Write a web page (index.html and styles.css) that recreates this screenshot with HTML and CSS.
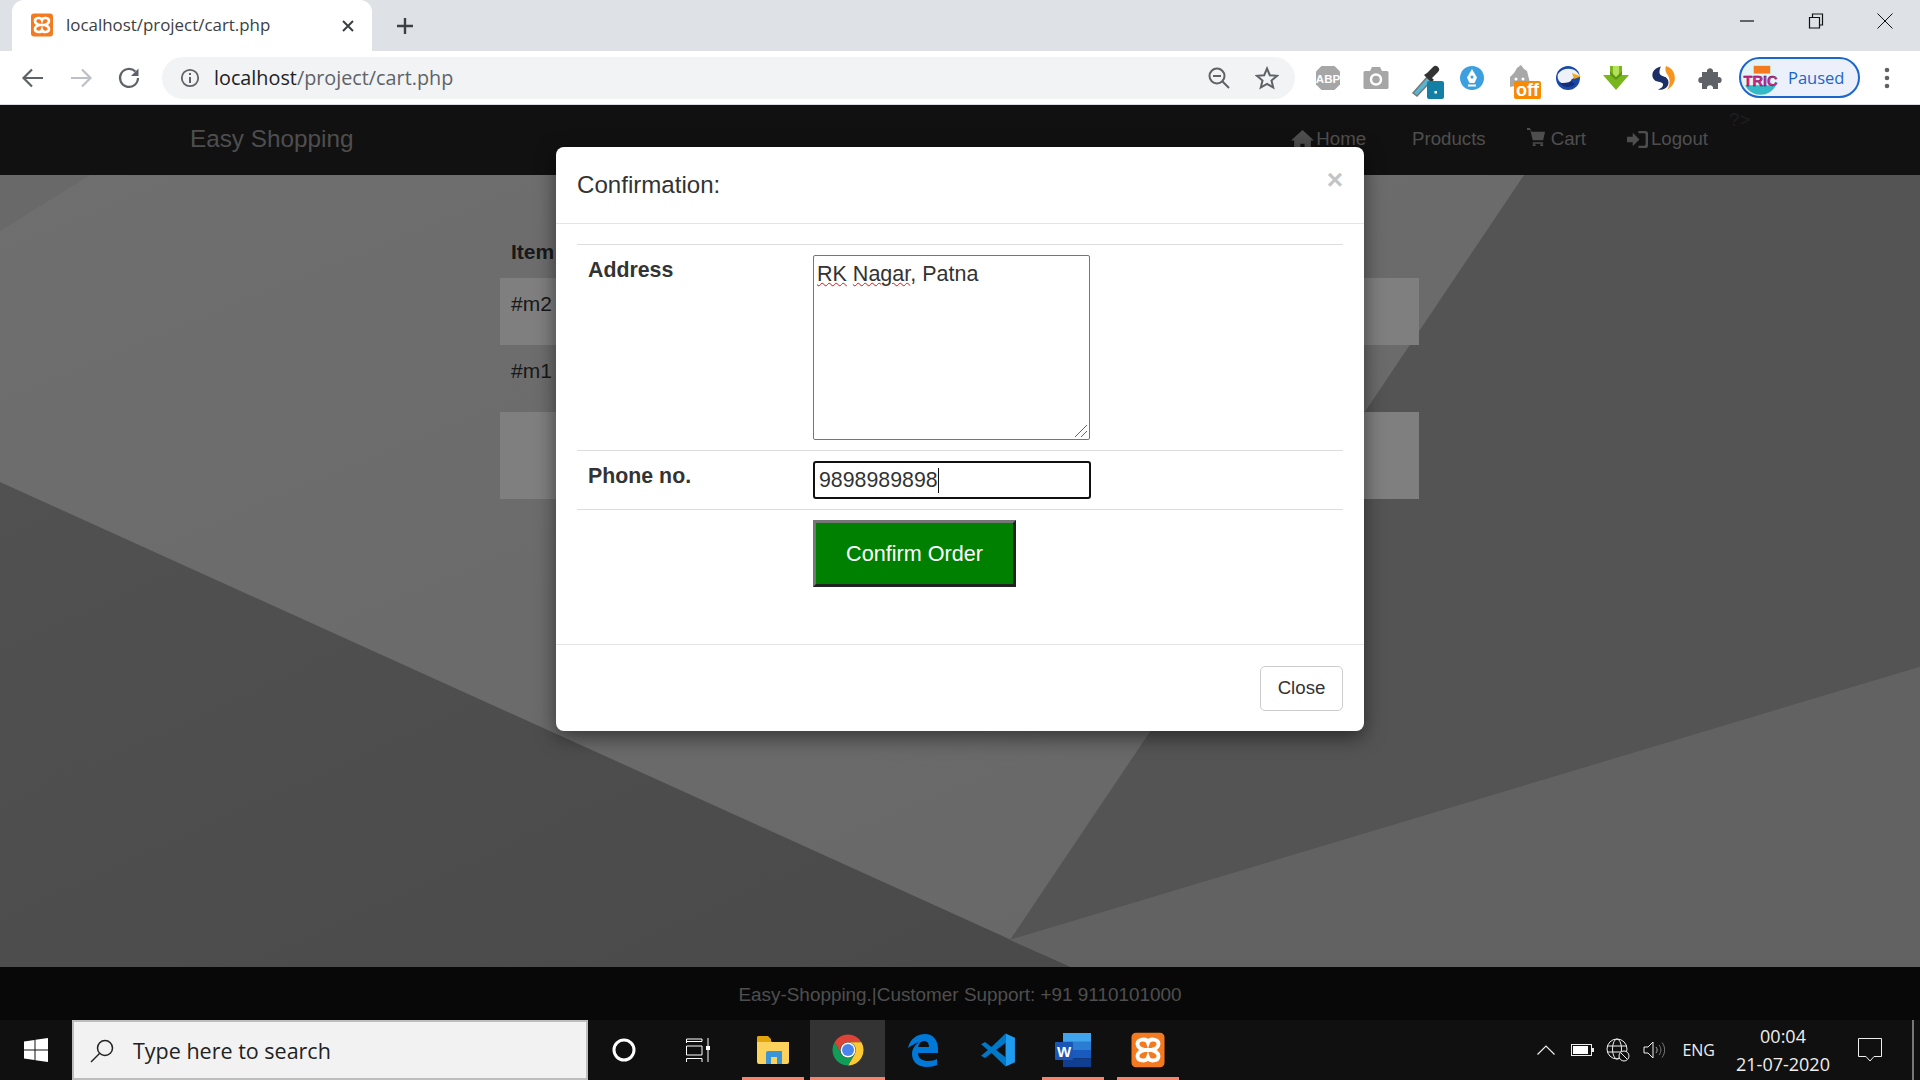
FILE: index.html
```html
<!DOCTYPE html>
<html lang="en">
<head>
    <meta charset="UTF-8">
    <meta name="viewport" content="width=device-width, initial-scale=1.0">
    <title>localhost/project/cart.php</title>
    <link rel="stylesheet" href="styles.css">
</head>
<body>
    <svg class="svg-defs" aria-hidden="true">
        <symbol id="xampp" viewBox="0 0 24 24">
            <rect x="1" y="0.500" width="22" height="23" rx="3" fill="#f47a20"/>
            <path d="M12 7C11 4 5 4.500 5 8C5 10 7.500 11.500 9.500 12C7.500 12.500 5 14 5 16C5 19.500 11 20 12 17C13 20 19 19.500 19 16C19 14 16.500 12.500 14.500 12C16.500 11.500 19 10 19 8C19 4.500 13 4 12 7ZM9.500 12H14.500" fill="none" stroke="#fff" stroke-width="2.600"/>
        </symbol>
        <linearGradient id="wall-light" x1="0" y1="0" x2="1" y2="1">
            <stop offset="0" stop-color="#dedede"/>
            <stop offset="1" stop-color="#cdcdcd"/>
        </linearGradient>
        <linearGradient id="wall-dark" x1="0" y1="0" x2="1" y2="1">
            <stop offset="0" stop-color="#a2a2a2"/>
            <stop offset="1" stop-color="#949494"/>
        </linearGradient>
    </svg>

    <!-- Browser tabs -->
    <div class="tab-strip">
        <div class="tab">
            <svg class="favicon" viewBox="0 0 24 24"><use href="#xampp"/></svg>
            <span class="tab-title">localhost/project/cart.php</span>
            <svg class="tab-close" viewBox="0 0 12 12"><path d="M1 1L11 11M11 1L1 11" stroke="#3c4043" stroke-width="2"/></svg>
        </div>
        <svg class="new-tab" viewBox="0 0 18 18"><path d="M9 1V17M1 9H17" stroke="#3c4043" stroke-width="2.400"/></svg>
        <div class="window-controls">
            <svg viewBox="0 0 16 16"><path d="M1 8H15" stroke="#111" stroke-width="1.200"/></svg>
            <svg viewBox="0 0 16 16"><path d="M1.500 4.500H11.500V15H1.500ZM4.500 4.500V1H14.500V12H11.500" fill="none" stroke="#111" stroke-width="1.200"/></svg>
            <svg viewBox="0 0 16 16"><path d="M0.500 0.500L15.500 15.500M15.500 0.500L0.500 15.500" stroke="#111" stroke-width="1"/></svg>
        </div>
    </div>

    <!-- Browser toolbar -->
    <div class="toolbar">
        <svg class="tool-btn" viewBox="0 0 48 24"><path d="M34 12H15M23 3.500L14.500 12L23 20.500" fill="none" stroke="#5f6368" stroke-width="2.200"/></svg>
        <svg class="tool-btn" viewBox="0 0 48 24"><path d="M14 12H33M25 3.500L33.500 12L25 20.500" fill="none" stroke="#bdc1c6" stroke-width="2.200"/></svg>
        <svg class="tool-btn" viewBox="0 0 48 24"><path d="M30.400 5.600A9 9 0 1 0 33 12" fill="none" stroke="#5f6368" stroke-width="2.200"/><path d="M33.500 2.500V10H26Z" fill="#5f6368"/></svg>
        <div class="omnibox">
            <svg class="info-icon" viewBox="0 0 20 20"><circle cx="10" cy="10" r="8.200" fill="none" stroke="#5f6368" stroke-width="1.800"/><path d="M10 9V15M10 5V7" stroke="#5f6368" stroke-width="2"/></svg>
            <span class="url"><span class="url-host">localhost</span>/project/cart.php</span>
            <svg class="omni-icon" viewBox="0 0 24 24"><circle cx="10" cy="10" r="7.500" fill="none" stroke="#5f6368" stroke-width="2"/><path d="M15.500 15.500L22 22M6 10H14" stroke="#5f6368" stroke-width="2"/></svg>
            <svg class="omni-icon" viewBox="0 0 24 24"><path d="M12 2.500L14.800 9.200L22 9.800L16.500 14.500L18.200 21.500L12 17.800L5.800 21.500L7.500 14.500L2 9.800L9.200 9.200Z" fill="none" stroke="#5f6368" stroke-width="2"/></svg>
        </div>
        <div class="extensions">
            <svg class="ext" viewBox="0 0 48 30"><path d="M17.500 3H30.500L36 8.500V21.500L30.500 27H17.500L12 21.500V8.500Z" fill="#a6a6a6"/><text x="24" y="19.500" class="ext-label">ABP</text></svg>
            <svg class="ext" viewBox="0 0 48 30"><path d="M13 8H18L20 4H28L30 8H35A1.500 1.500 0 0 1 36.500 9.500V25A1.500 1.500 0 0 1 35 26H13A1.500 1.500 0 0 1 11.500 25V9.500A1.500 1.500 0 0 1 13 8Z" fill="#a6a6a6"/><circle cx="24" cy="16.500" r="5" fill="none" stroke="#fff" stroke-width="2.500"/></svg>
            <svg class="ext ext-tall" viewBox="0 0 48 42"><path d="M13 30L28 13L32 17L17 33Z" fill="#5ab4d0" stroke="#777" stroke-width="1.500"/><path d="M27 10L33 4A3 3 0 0 1 38 9L32 15L34 17L31 19L24 12Z" fill="#333"/><rect x="27" y="18" width="17" height="18" rx="2" fill="#147fa5"/><rect x="34.500" y="28" width="2.500" height="2.500" fill="#fff"/></svg>
            <svg class="ext" viewBox="0 0 48 30"><path d="M24 3C31 3 36 8.500 36 15C36 21.500 31 27 24 27C17 27 12 21.500 12 15C12 8.500 17 3 24 3Z" fill="#3b9fe0"/><path d="M24 6L29 14.500L26.500 20H21.500L19 14.500Z" fill="#fff"/><path d="M20 22.500H28" stroke="#fff" stroke-width="2"/><circle cx="24" cy="14" r="1.500" fill="#3b9fe0"/></svg>
            <svg class="ext ext-tall" viewBox="0 0 48 42"><path d="M14 24V14L18 10L21 5L25 2L28 6L31 8L34 20Z" fill="#a8a8a8"/><circle cx="20" cy="16" r="1.500" fill="#fff"/><circle cx="27" cy="16" r="1.500" fill="#fff"/><rect x="18" y="18" width="27" height="18" rx="2" fill="#f98a00"/><text x="31.500" y="32.500" class="ext-off">off</text></svg>
            <svg class="ext" viewBox="0 0 48 30"><circle cx="24" cy="15" r="12" fill="#1a49a8"/><path d="M14 11C18 5 28 4 33 9L36 13L30 15C27 16 26 18 27 22C23 23 18 21 15 18C14 16 13 14 14 11Z" fill="#eef2f8"/><path d="M28 10L37 13.500L30 16Z" fill="#f2a81d"/><path d="M16 20C20 25 27 25 31 21L27 18C24 20 20 20 16 20Z" fill="#132f7a"/></svg>
            <svg class="ext" viewBox="0 0 48 30"><path d="M18 3H30V12H37L24 27L11 12H18Z" fill="#79b51d"/><path d="M21 3H27V14H21Z" fill="#b4e05a"/><path d="M18 8L24 14L30 8V12L24 17L18 12Z" fill="#5d9a12"/></svg>
            <svg class="ext" viewBox="0 0 48 30"><path d="M21 3.500C14 5 11 10 13 15C15 20 22 18 23 21C23.500 24 20 26 18 26.500C26 28 30 22 28 17C26 12 20 14 19.500 10C19.300 8 20 5 21 3.500Z" fill="#1c2f66"/><path d="M26 3C33 5 36 12 34.500 18C33.500 22 30 25 27 27C31 21 30 15 27 11C25 8 25 5 26 3Z" fill="#f7941d"/></svg>
            <svg class="ext" viewBox="0 0 48 30"><path d="M14 9H19C18 4 26 4 25 9H30V14C35 13 35 21 30 20V26H25C26 21 18 21 19 26H14V20C9 21 9 13 14 14Z" fill="#5f6368"/></svg>
        </div>
        <div class="profile">
            <svg class="avatar" viewBox="0 0 36 36"><circle cx="18" cy="18" r="18" fill="#e3f4f6"/><path d="M2 26H34A18 18 0 0 1 2 26Z" fill="#35b8c8"/><rect x="11" y="6" width="17" height="8" fill="#f47a20"/><text x="18" y="27" class="avatar-label">TRIC</text></svg>
            <span class="profile-label">Paused</span>
        </div>
        <svg class="menu-dots" viewBox="0 0 6 22"><circle cx="3" cy="3" r="2.300" fill="#5f6368"/><circle cx="3" cy="11" r="2.300" fill="#5f6368"/><circle cx="3" cy="19" r="2.300" fill="#5f6368"/></svg>
    </div>

    <!-- The page inside the browser -->
    <div class="viewport">
        <nav class="navbar">
            <a class="brand">Easy Shopping</a>
            <span class="stray-text">?&gt;</span>
            <ul class="nav-links">
                <li class="nav-home"><svg class="glyph glyph-home" viewBox="0 0 22 22"><path d="M11 2L22 12H19V22H13V15H9V22H3V12H0Z"/></svg>Home</li>
                <li>Products</li>
                <li><svg class="glyph glyph-cart" viewBox="0 0 20 22"><path d="M0 1H3L5 5H19L17 14H6L3.500 3H0ZM6 16H17V17.500H6ZM6 18H9V20H6ZM14 18H17V20H14Z"/></svg>Cart</li>
                <li><svg class="glyph glyph-logout" viewBox="0 0 22 22"><path d="M0 8H6V4L13 11L6 18V14H0ZM12 2H19A3 3 0 0 1 22 5V17A3 3 0 0 1 19 20H12V17.500H18A1.500 1.500 0 0 0 19.500 16V6A1.500 1.500 0 0 0 18 4.500H12Z"/></svg>Logout</li>
            </ul>
        </nav>

        <main class="content">
            <svg class="wallpaper" viewBox="0 0 1920 792" preserveAspectRatio="none">
                <rect width="1920" height="792" fill="url(#wall-light)"/>
                <polygon points="0,0 90,0 0,56" fill="#d2d2d2"/>
                <polygon points="0,307 1071,792 0,792" fill="url(#wall-dark)"/>
                <polygon points="1524,0 1920,0 1920,492 1010,765" fill="#a8a8a8"/>
                <polygon points="1010,765 1920,492 1920,792 1071,792" fill="#c4c4c4"/>
            </svg>
            <table class="cart-table">
                <tr><th>Item</th></tr>
                <tr class="row-odd"><td>#m2</td></tr>
                <tr><td>#m1</td></tr>
                <tr class="row-total"><td></td></tr>
            </table>
        </main>

        <footer class="site-footer">Easy-Shopping.|Customer Support: +91 9110101000</footer>

        <div class="backdrop"></div>

        <!-- Confirmation modal -->
        <div class="modal-wrap">
            <div class="modal">
                <div class="modal-header">
                    <h4>Confirmation:</h4>
                    <span class="modal-x">×</span>
                </div>
                <div class="modal-body">
                    <div class="form-row">
                        <label>Address</label>
                        <div class="fake-textarea">
                            <span class="misspelled">RK</span> <span class="misspelled">Nagar</span>, Patna
                            <svg class="grip" viewBox="0 0 14 14"><path d="M1 13L13 1M7 13L13 7" stroke="#666" stroke-width="1"/></svg>
                        </div>
                    </div>
                    <div class="form-row">
                        <label>Phone no.</label>
                        <div class="fake-input">9898989898<span class="caret"></span></div>
                    </div>
                    <div class="form-row form-row-last">
                        <span></span>
                        <button class="confirm-btn">Confirm Order</button>
                    </div>
                </div>
                <div class="modal-footer">
                    <button class="close-btn">Close</button>
                </div>
            </div>
        </div>
    </div>

    <!-- Windows taskbar -->
    <div class="taskbar">
        <div class="start">
            <svg viewBox="0 0 24 24"><path d="M0 3.500L10.500 2V11.500H0ZM11.500 1.800L24 0V11.500H11.500ZM0 12.500H10.500V22L0 20.500ZM11.500 12.500H24V24L11.500 22.200Z" fill="#fff"/></svg>
        </div>
        <div class="search-box">
            <svg viewBox="0 0 24 24"><circle cx="15" cy="9" r="7.500" fill="none" stroke="#222" stroke-width="1.500"/><path d="M9.500 14.500L1 23" stroke="#222" stroke-width="1.500"/></svg>
            <span>Type here to search</span>
        </div>
        <div class="tile tile-narrow"><svg class="cortana" viewBox="0 0 24 24"><circle cx="12" cy="12" r="10" fill="none" stroke="#fff" stroke-width="3"/></svg></div>
        <div class="tile"><svg class="task-view" viewBox="0 0 24 24"><path d="M0.500 5V1H16M0.500 3.500H16V1M0.500 8H16V17H0.500ZM0.500 24V20.500H16V24M22 0V24" fill="none" stroke="#fff" stroke-width="1"/><rect x="20" y="8" width="4" height="4" fill="#fff"/></svg></div>
        <div class="tile tile-open">
            <svg class="folder" viewBox="0 0 32 28"><path d="M0 5A2 2 0 0 1 2 3H12L15 6H32V26A2 2 0 0 1 30 28H2A2 2 0 0 1 0 26Z" fill="#fbd25c"/><path d="M0 3A2 2 0 0 1 2 0H11L14 3V6H0Z" fill="#e2a50b"/><path d="M9 28V17A2 2 0 0 1 11 15H25V28H20V21H14V28Z" fill="#3a94d8"/></svg>
        </div>
        <div class="tile tile-open tile-active">
            <svg class="chrome" viewBox="0 0 48 48"><path d="M5 13A22 22 0 0 1 43 13H24A11 11 0 0 0 14.500 29.500Z" fill="#db4437"/><path d="M43 13A22 22 0 0 1 24 46L33.500 29.500A11 11 0 0 0 24 13Z" fill="#fcc934"/><path d="M24 46A22 22 0 0 1 5 13L14.500 29.500A11 11 0 0 0 33.500 29.500Z" fill="#0f9d58"/><circle cx="24" cy="24" r="10.500" fill="#fff"/><circle cx="24" cy="24" r="8.500" fill="#4a85ed"/></svg>
        </div>
        <div class="tile">
            <svg class="edge" viewBox="0 0 32 34"><path d="M1 15C3 6 10 1 18 1C26 1 31 7 31 16V20H11C11 26 16 28 21 28C25 28 28 27 30 26V32C27 33 24 34 20 34C10 34 5 28 5 21C5 16 8 12 12 9C9 10 5 12 1 15ZM11 14H22C22 10 20 8 17 8C14 8 12 10 11 14Z" fill="#0078d7"/></svg>
        </div>
        <div class="tile">
            <svg class="vscode" viewBox="0 0 100 100"><path d="M71 4L32 42L14 28L3 34L22 50L3 66L14 72L32 58L71 96V70L45 50L71 30Z" fill="#0078c8"/><path d="M71 4L97 16V84L71 96Z" fill="#1f9cf0"/></svg>
        </div>
        <div class="tile tile-open">
            <svg class="word" viewBox="0 0 36 34"><rect x="8" y="0" width="28" height="9" fill="#41a5ee"/><rect x="8" y="8.500" width="28" height="8.500" fill="#2b7cd3"/><rect x="8" y="17" width="28" height="8.500" fill="#185abd"/><rect x="8" y="25.500" width="28" height="8.500" fill="#103f91"/><rect x="0" y="9" width="18" height="18" rx="1" fill="#1a56b5"/><text x="9" y="23.500" class="word-letter">W</text></svg>
        </div>
        <div class="tile tile-open"><svg class="xampp" viewBox="0 0 24 24"><use href="#xampp"/></svg></div>

        <div class="tray">
            <svg class="tray-chevron" viewBox="0 0 18 10"><path d="M0.500 9.500L9 1L17.500 9.500" fill="none" stroke="#eee" stroke-width="1.200"/></svg>
            <svg class="tray-battery" viewBox="0 0 23 12"><rect x="0.500" y="0.500" width="20" height="11" fill="none" stroke="#eee"/><rect x="2" y="2" width="15" height="8" fill="#fff"/><rect x="21" y="4" width="2" height="4" fill="#eee"/></svg>
            <svg class="tray-globe" viewBox="0 0 24 24"><circle cx="11" cy="11" r="10" fill="none" stroke="#eee"/><ellipse cx="11" cy="11" rx="4.500" ry="10" fill="none" stroke="#eee"/><path d="M1 8H21M1 14H21" stroke="#eee"/><circle cx="18" cy="18" r="5" fill="#101010" stroke="#eee"/><path d="M15 15L21 21" stroke="#eee"/></svg>
            <svg class="tray-sound" viewBox="0 0 22 18"><path d="M1 6H5L10 1V17L5 12H1Z" fill="none" stroke="#eee"/><path d="M13 6C14.500 8 14.500 10 13 12" fill="none" stroke="#aaa"/><path d="M16 4C18.500 7 18.500 11 16 14M19 1.500C22.500 6 22.500 12 19 16.500" fill="none" stroke="#777"/></svg>
            <span class="tray-lang">ENG</span>
            <div class="clock"><span>00:04</span><span>21-07-2020</span></div>
            <svg class="tray-notify" viewBox="0 0 24 24"><path d="M0.500 0.500H23.500V18.500H16L12 23L8 18.500H0.500Z" fill="none" stroke="#eee"/></svg>
            <span class="show-desktop"></span>
        </div>
    </div>
</body>
</html>
```

FILE: styles.css
```css
* {
    box-sizing: border-box;
}
html, body {
    margin: 0;
    height: 1080px;
    overflow: hidden;
}
body {
    display: flex;
    flex-direction: column;
    font-family: "Liberation Sans", Arial, sans-serif;
    font-size: 18.67px;
    line-height: 1.43;
    color: #333;
}
.svg-defs {
    position: absolute;
    width: 0;
    height: 0;
}

/* browser tabs */
.tab-strip {
    height: 51px;
    flex: none;
    display: flex;
    align-items: flex-end;
    padding-left: 12px;
    background: #dee1e6;
}
.tab {
    width: 360px;
    height: 51px;
    display: flex;
    align-items: center;
    padding: 0 18px 0 18px;
    background: #fff;
    border-radius: 12px 12px 0 0;
}
.favicon {
    width: 24px;
    height: 24px;
    margin-bottom: 2px;
}
.tab-title {
    margin-left: 12px;
    flex: 1;
    font-family: "Open Sans", sans-serif;
    font-size: 16.9px;
    color: #3c4043;
    white-space: nowrap;
}
.tab-close {
    width: 12px;
    height: 12px;
}
.new-tab {
    width: 18px;
    height: 18px;
    margin: 0 0 16px 24px;
}
.window-controls {
    margin-left: auto;
    align-self: flex-start;
    display: flex;
    gap: 53px;
    padding: 13px 27px 0 0;
}
.window-controls svg {
    width: 16px;
    height: 16px;
}

/* browser toolbar */
.toolbar {
    height: 54px;
    flex: none;
    display: flex;
    align-items: center;
    padding: 0 0 0 9px;
    background: #fff;
    border-bottom: 1px solid #dadce0;
}
.tool-btn {
    width: 48px;
    height: 24px;
    flex: none;
}
.omnibox {
    width: 1133px;
    height: 42px;
    margin-left: 9px;
    flex: none;
    display: flex;
    align-items: center;
    padding: 0 16px 0 18px;
    background: #f1f3f4;
    border-radius: 21px;
}
.info-icon {
    width: 20px;
    height: 20px;
}
.url {
    margin-left: 14px;
    padding-top: 2px;
    flex: 1;
    font-family: "Open Sans", sans-serif;
    font-size: 19.8px;
    color: #5f6368;
}
.url-host {
    color: #202124;
}
.omni-icon {
    width: 24px;
    height: 24px;
    margin-left: 24px;
}
.extensions {
    display: flex;
    align-items: flex-start;
    height: 30px;
    margin-left: 9px;
    flex: none;
}
.ext {
    width: 48px;
    height: 30px;
    overflow: visible;
}
.ext-tall {
    height: 42px;
}
.ext-label {
    font-size: 11.5px;
    font-weight: bold;
    fill: #fff;
    text-anchor: middle;
}
.ext-off {
    font-size: 18px;
    font-weight: bold;
    fill: #fff;
    text-anchor: middle;
}
.profile {
    width: 121px;
    height: 41px;
    margin-left: 3px;
    flex: none;
    display: flex;
    align-items: center;
    padding-left: 2px;
    background: #ebf0fb;
    border: 2px solid #1a66cc;
    border-radius: 21px;
}
.avatar {
    width: 35px;
    height: 35px;
    flex: none;
}
.avatar-label {
    font-size: 15px;
    font-weight: bold;
    fill: #ec1f8e;
    stroke: #221133;
    stroke-width: 0.4px;
    text-anchor: middle;
}
.profile-label {
    margin-left: 10px;
    font-family: "Open Sans", sans-serif;
    font-size: 16.5px;
    color: #1a66cc;
}
.menu-dots {
    width: 6px;
    height: 22px;
    margin-left: 24px;
}

/* page in the browser */
.viewport {
    position: relative;
    flex: 1;
    display: flex;
    flex-direction: column;
    min-height: 0;
}
.navbar {
    position: relative;
    height: 70px;
    flex: none;
    display: flex;
    align-items: center;
    justify-content: space-between;
    padding: 0 212px 2px 190px;
    background: #222;
    color: #9d9d9d;
}
.brand {
    font-size: 24.3px;
}
.stray-text {
    position: absolute;
    left: 1729px;
    top: 2px;
    color: #3c3c3c;
}
.nav-links {
    display: flex;
    gap: 41px;
    margin: 0;
    padding: 0;
    list-style: none;
}
.nav-links li {
    display: flex;
    align-items: center;
}
.nav-links .nav-home {
    margin-right: 5px;
}
.glyph {
    fill: #9d9d9d;
    flex: none;
}
.glyph-home {
    width: 23px;
    height: 23px;
    margin-right: 2px;
}
.glyph-cart {
    width: 19px;
    height: 21px;
    margin-right: 5px;
    margin-top: -4px;
}
.glyph-logout {
    width: 21px;
    height: 21px;
    margin-right: 3px;
}
.content {
    position: relative;
    flex: 1;
    padding: 62px 0 0 500px;
    min-height: 0;
}
.wallpaper {
    position: absolute;
    inset: 0;
    width: 100%;
    height: 100%;
}
.cart-table {
    position: relative;
    width: 919px;
    border-collapse: collapse;
}
.cart-table th {
    height: 38px;
    padding: 0 11px 11px;
    text-align: left;
    font-size: 21px;
}
.cart-table td {
    height: 67px;
    padding: 11px;
    vertical-align: top;
    color: #333;
    font-size: 21px;
}
.row-odd td {
    height: 67px;
    background: #fff;
}
.row-total td {
    height: 87px;
    background: #fff;
}
.site-footer {
    position: relative;
    height: 53px;
    flex: none;
    display: flex;
    align-items: center;
    justify-content: center;
    padding-top: 3px;
    background: #111;
    color: #9d9d9d;
    font-size: 18.9px;
}
.backdrop {
    position: absolute;
    inset: 0;
    background: rgba(0, 0, 0, 0.5);
}

/* confirmation modal */
.modal-wrap {
    position: absolute;
    inset: 0;
    display: flex;
    justify-content: center;
    align-items: flex-start;
    padding-top: 42px;
}
.modal {
    width: 808px;
    background: #fff;
    border-radius: 8px;
    box-shadow: 0 6px 20px rgba(0, 0, 0, 0.5);
}
.modal-header {
    height: 77px;
    display: flex;
    justify-content: space-between;
    padding: 21px 21px 0;
    border-bottom: 1px solid #e5e5e5;
}
.modal-header h4 {
    margin: 0;
    font-size: 24.1px;
    font-weight: normal;
    line-height: 34px;
}
.modal-x {
    margin-top: -8px;
    font-size: 28px;
    font-weight: bold;
    color: #c4c4c4;
}
.modal-body {
    height: 420px;
    padding: 20px 21px 0;
}
.form-row {
    display: grid;
    grid-template-columns: 236px 1fr;
    padding: 10px 0;
    border-top: 1px solid #ddd;
    font-size: 21.33px;
    align-items: start;
}
.form-row label {
    padding-left: 11px;
    font-weight: bold;
}
.fake-textarea {
    position: relative;
    width: 277px;
    height: 185px;
    padding: 4px 3px;
    border: 1px solid #767676;
    border-radius: 2px;
    font-size: 21.5px;
    line-height: 28px;
}
.misspelled {
    text-decoration: underline wavy #e01010;
    text-decoration-thickness: 1px;
}
.grip {
    position: absolute;
    right: 1px;
    bottom: 1px;
    width: 14px;
    height: 14px;
}
.fake-input {
    width: 278px;
    height: 38px;
    display: flex;
    align-items: center;
    padding: 0 4px;
    border: 2px solid #101010;
    border-radius: 3px;
}
.caret {
    width: 1px;
    height: 25px;
    background: #111;
}
.form-row-last {
    padding-top: 10px;
}
.confirm-btn {
    width: 203px;
    height: 67px;
    padding: 0;
    background: #008000;
    border: 3px solid;
    border-color: #767676 #222 #222 #767676;
    color: #fff;
    font-family: inherit;
    font-size: 21.6px;
}
.modal-footer {
    display: flex;
    justify-content: flex-end;
    padding: 21px 21px 20px;
    border-top: 1px solid #e5e5e5;
}
.close-btn {
    width: 83px;
    height: 45px;
    padding: 0 0 2px;
    background: #fff;
    border: 1px solid #ccc;
    border-radius: 5px;
    color: #333;
    font-family: inherit;
    font-size: 18.67px;
}

/* windows taskbar */
.taskbar {
    height: 60px;
    flex: none;
    display: flex;
    align-items: stretch;
    background: #101010;
}
.start {
    width: 72px;
    display: flex;
    align-items: center;
    justify-content: center;
}
.start svg {
    width: 24px;
    height: 24px;
}
.search-box {
    width: 516px;
    display: flex;
    align-items: center;
    padding: 2px 0 0 16px;
    background: #f2f2f2;
    border: 2px solid #bdbdbd;
    font-family: "Open Sans", sans-serif;
    font-size: 21.5px;
    color: #222;
}
.search-box svg {
    width: 24px;
    height: 24px;
    margin-right: 19px;
}
.tile {
    width: 75px;
    position: relative;
    display: flex;
    align-items: center;
    justify-content: center;
}
.tile svg {
    width: 34px;
    height: 34px;
}
.tile-narrow {
    width: 72px;
}
.tile-open::after {
    content: "";
    position: absolute;
    left: 7px;
    right: 6px;
    bottom: 0;
    height: 3px;
    background: #f4846c;
}
.tile-active {
    background: #333;
}
.tile-active::after {
    left: 0;
    right: 0;
}
.tile .cortana {
    width: 24px;
    height: 24px;
}
.tile .task-view {
    width: 24px;
    height: 24px;
}
.tile .folder {
    width: 32px;
    height: 28px;
}
.tile .vscode {
    width: 36px;
    height: 36px;
}
.tile .word {
    width: 36px;
    height: 34px;
}
.word-letter {
    font-size: 15px;
    font-weight: bold;
    fill: #fff;
    text-anchor: middle;
}
.tile .xampp {
    width: 36px;
    height: 36px;
}
.tray {
    margin-left: auto;
    display: flex;
    align-items: center;
    color: #eee;
    position: relative;
}
.tray-chevron {
    width: 18px;
    height: 10px;
}
.tray-battery {
    width: 23px;
    height: 12px;
    margin-left: 16px;
}
.tray-globe {
    width: 24px;
    height: 24px;
    margin-left: 12px;
}
.tray-sound {
    width: 22px;
    height: 18px;
    margin-left: 13px;
}
.tray-lang {
    margin-left: 17px;
    font-family: "Open Sans", sans-serif;
    font-size: 16px;
}
.clock {
    width: 94px;
    margin-left: 21px;
    display: flex;
    flex-direction: column;
    align-items: center;
    gap: 5px;
    font-family: "Open Sans", sans-serif;
    font-size: 18px;
    line-height: 23px;
}
.tray-notify {
    width: 24px;
    height: 24px;
    margin-left: 28px;
}
.show-desktop {
    width: 2px;
    height: 60px;
    margin-left: 30px;
    margin-right: 6px;
    background: #777;
}
```
